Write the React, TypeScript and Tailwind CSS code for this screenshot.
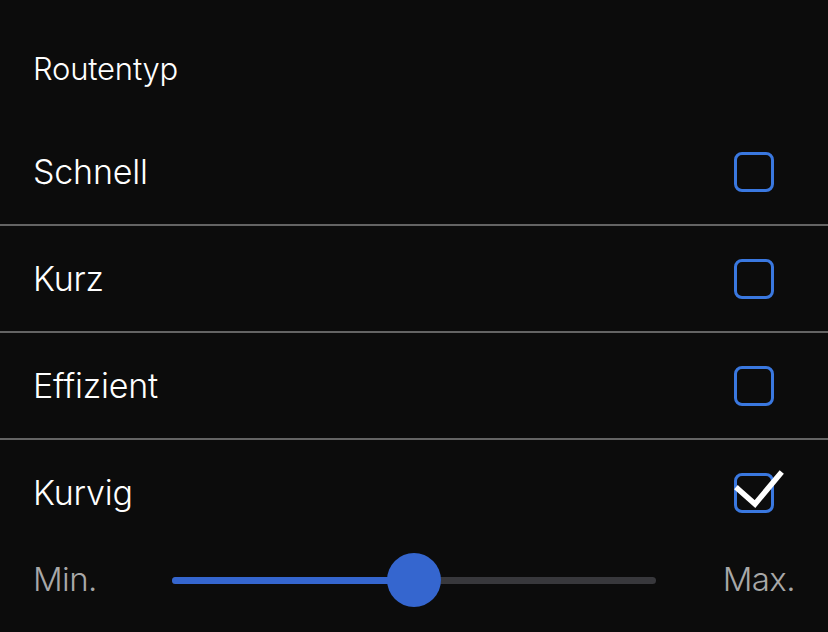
import { useState } from "react";

const options = ["Schnell", "Kurz", "Effizient", "Kurvig"];

const Checkbox = ({ checked }: { checked: boolean }) => {
    return <div className="relative w-10 h-10 rounded-[8px] border-[3px] border-[#3a78e0]">
        {checked && (
            <svg className="absolute -top-[22px] -left-[6px] overflow-visible" width="54" height="54" viewBox="0 0 54 54">
                <path d="M7 35 L24 50 L49 20" fill="none" stroke="white" strokeWidth="5.5" strokeLinecap="square" />
            </svg>
        )}
    </div>
}

export default function App() {
    const [selected] = useState("Kurvig");
    const value = 50;

    return <div className="bg-[#0c0c0c] w-[828px] h-[632px] overflow-hidden text-white font-['Inter',sans-serif]">
        <div className="h-[119px] flex items-center px-[33px] pt-[20px]">
            <div className="text-[31px] font-light tracking-[-0.2px]">Routentyp</div>
        </div>

        {options.map((opt, i) => (
            <div key={opt}>
                {i > 0 && <div className="h-[2px] bg-[#646464]" />}
                <div className="h-[105px] flex items-center justify-between pl-[33px] pr-[54px]">
                    <div className="text-[34px] font-light tracking-[-0.2px]">{opt}</div>
                    <Checkbox checked={selected === opt} />
                </div>
            </div>
        ))}

        <div className="flex items-center h-[70px] pl-[33px] pr-[33px]">
            <div className="w-[139px] text-[33px] font-light text-[#a8a8a8] tracking-[-0.6px]">Min.</div>
            <div className="relative w-[484px] h-[7px] rounded-full bg-[#38383c]">
                <div className="absolute left-0 top-0 h-full rounded-full bg-[#3566cf]" style={{ width: `${value}%` }} />
                <div className="absolute top-1/2 w-[54px] h-[54px] -translate-x-1/2 -translate-y-1/2 rounded-full bg-[#3566cf]" style={{ left: `${value}%` }} />
            </div>
            <div className="flex-1 text-right text-[33px] font-light text-[#a8a8a8] tracking-[-0.6px]">Max.</div>
        </div>
    </div>
}
